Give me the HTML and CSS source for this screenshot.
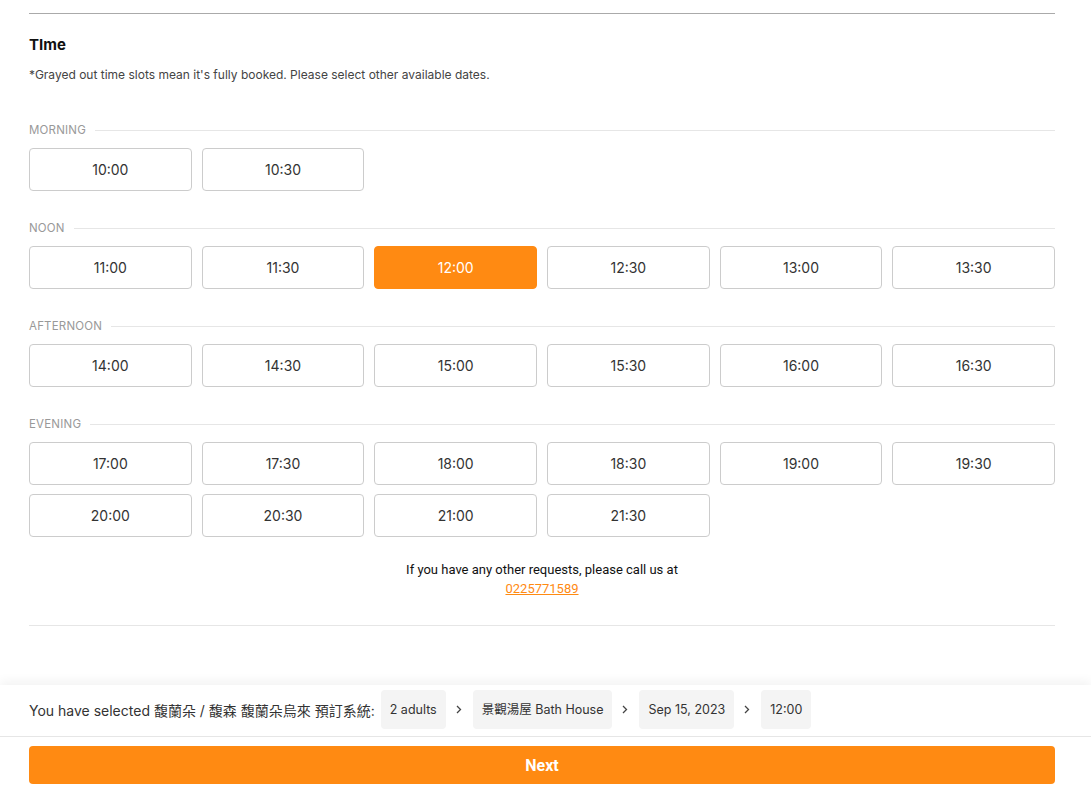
FILE: index.html
```html
<!DOCTYPE html>
<html lang="en">
<head>
<meta charset="utf-8">
<title>Time</title>
<link rel="stylesheet" href="styles.css">
</head>
<body>
<main class="page">
  <div class="top-rule"></div>
  <h2 class="title">TIme</h2>
  <p class="note">*Grayed out time slots mean it's fully booked. Please select other available dates.</p>

  <section class="period">
    <div class="period-label"><span>MORNING</span></div>
    <div class="slots">
      <button class="slot">10:00</button>
      <button class="slot">10:30</button>
    </div>
  </section>

  <section class="period">
    <div class="period-label"><span>NOON</span></div>
    <div class="slots">
      <button class="slot">11:00</button>
      <button class="slot">11:30</button>
      <button class="slot selected">12:00</button>
      <button class="slot">12:30</button>
      <button class="slot">13:00</button>
      <button class="slot">13:30</button>
    </div>
  </section>

  <section class="period">
    <div class="period-label"><span>AFTERNOON</span></div>
    <div class="slots">
      <button class="slot">14:00</button>
      <button class="slot">14:30</button>
      <button class="slot">15:00</button>
      <button class="slot">15:30</button>
      <button class="slot">16:00</button>
      <button class="slot">16:30</button>
    </div>
  </section>

  <section class="period">
    <div class="period-label"><span>EVENING</span></div>
    <div class="slots">
      <button class="slot">17:00</button>
      <button class="slot">17:30</button>
      <button class="slot">18:00</button>
      <button class="slot">18:30</button>
      <button class="slot">19:00</button>
      <button class="slot">19:30</button>
      <button class="slot">20:00</button>
      <button class="slot">20:30</button>
      <button class="slot">21:00</button>
      <button class="slot">21:30</button>
    </div>
  </section>

  <div class="contact">
    <p class="contact-text">If you have any other requests, please call us at</p>
    <a class="contact-link" href="#">0225771589</a>
  </div>
  <div class="bottom-rule"></div>
</main>

<footer class="footer">
  <div class="summary">
    <span class="summary-text">You have selected 馥蘭朵 / 馥森 馥蘭朵烏來 預訂系統:</span>
    <span class="chip">2 adults</span>
    <svg class="chev" width="6" height="9" viewBox="0 0 6 9"><path d="M1 1l3.5 3.5L1 8" fill="none" stroke="#444" stroke-width="1.3"/></svg>
    <span class="chip">景觀湯屋 Bath House</span>
    <svg class="chev" width="6" height="9" viewBox="0 0 6 9"><path d="M1 1l3.5 3.5L1 8" fill="none" stroke="#444" stroke-width="1.3"/></svg>
    <span class="chip">Sep 15, 2023</span>
    <svg class="chev" width="6" height="9" viewBox="0 0 6 9"><path d="M1 1l3.5 3.5L1 8" fill="none" stroke="#444" stroke-width="1.3"/></svg>
    <span class="chip">12:00</span>
  </div>
  <div class="actions">
    <button class="next">Next</button>
  </div>
</footer>
</body>
</html>
```

FILE: styles.css
```css
html, body {
  margin: 0;
  padding: 0;
  background: #fff;
}
body {
  font-family: Inter, "Noto Sans CJK TC", sans-serif;
  color: #222;
}
.page {
  padding: 13px 36px 0 29px;
}
.top-rule {
  border-top: 1px solid #aaaaaa;
}
.title {
  margin: 21px 0 0;
  font-size: 15px;
  line-height: 20px;
  font-weight: 700;
  color: #111;
}
.note {
  margin: 12px 0 0;
  font-size: 12px;
  line-height: 16px;
  color: #444;
}
.period {
  margin-top: 29px;
}
.period:first-of-type {
  margin-top: 39px;
}
.period-label {
  display: flex;
  align-items: center;
  gap: 9px;
  font-size: 11.5px;
  line-height: 16px;
  color: #999;
  letter-spacing: 0.2px;
}
.period-label::after {
  content: "";
  flex: 1;
  border-top: 1px solid #e6e6e6;
}
.slots {
  margin-top: 10px;
  display: grid;
  grid-template-columns: repeat(6, 1fr);
  column-gap: 10px;
  row-gap: 9px;
}
.slot {
  height: 43px;
  border: 1px solid #cccccc;
  border-radius: 4px;
  background: #fff;
  font-family: Inter, sans-serif;
  font-size: 14px;
  color: #333;
  padding: 0;
}
.slot.selected {
  background: #ff8a12;
  border-color: #ff8a12;
  color: #fff;
}
.contact {
  margin-top: 23px;
  text-align: center;
  font-family: Roboto, sans-serif;
  font-size: 13px;
  line-height: 19px;
}
.contact-text {
  margin: 0;
  color: #111;
}
.contact-link {
  color: #ff8a12;
  text-decoration: underline;
}
.bottom-rule {
  margin-top: 27px;
  border-top: 1px solid #e6e6e6;
}
.footer {
  margin-top: 59px;
  box-shadow: 0 -4px 10px rgba(0, 0, 0, 0.05);
  background: #fff;
}
.summary {
  display: flex;
  align-items: center;
  height: 49px;
  padding: 0 36px 2px 29px;
  border-bottom: 1px solid #e6e6e6;
  font-size: 14px;
  color: #333;
}
.summary-text {
  margin-right: 6px;
}
.chip {
  background: #f4f4f4;
  border-radius: 4px;
  height: 39px;
  line-height: 39px;
  padding: 0 9px;
  font-size: 12.5px;
  color: #333;
}
.chev {
  margin: 0 11px 0 10px;
}
.actions {
  padding: 9px 36px 3px 29px;
}
.next {
  display: block;
  width: 100%;
  height: 38px;
  border: none;
  border-radius: 4px;
  background: #ff8a12;
  color: #fff;
  font-family: Roboto, sans-serif;
  font-weight: 700;
  font-size: 16px;
}
```
